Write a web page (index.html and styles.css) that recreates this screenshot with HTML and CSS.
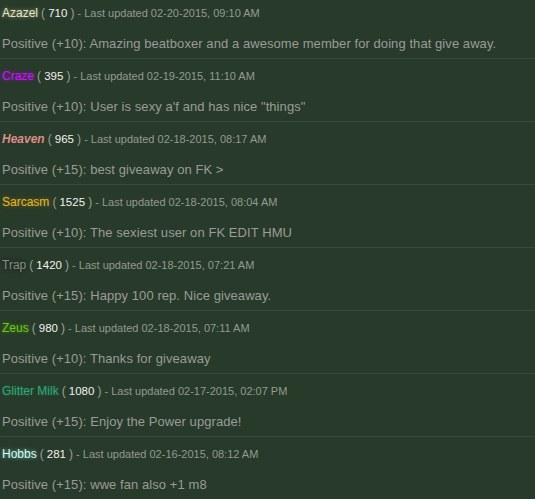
FILE: index.html
```html
<!DOCTYPE html>
<html lang="en">
<head>
  <meta charset="UTF-8" />
  <title>Reputation</title>
  <link rel="stylesheet" href="styles.css">
</head>
<body>
  <div class="rep-list">
    <div class="rep">
      <div class="rep-head"><span class="user u-azazel">Azazel</span> <span class="paren">(</span> <span class="num">710</span> <span class="paren">)</span> - Last updated 02-20-2015, 09:10 AM</div>
      <div class="rep-body">Positive (+10): Amazing beatboxer and a awesome member for doing that give away.</div>
    </div>
    <div class="rep">
      <div class="rep-head"><span class="user u-craze">Craze</span> <span class="paren">(</span> <span class="num">395</span> <span class="paren">)</span> - Last updated 02-19-2015, 11:10 AM</div>
      <div class="rep-body">Positive (+10): User is sexy a'f and has nice "things"</div>
    </div>
    <div class="rep">
      <div class="rep-head"><span class="user u-heaven">Heaven</span> <span class="paren">(</span> <span class="num">965</span> <span class="paren">)</span> - Last updated 02-18-2015, 08:17 AM</div>
      <div class="rep-body">Positive (+15): best giveaway on FK &gt;</div>
    </div>
    <div class="rep">
      <div class="rep-head"><span class="user u-sarcasm">Sarcasm</span> <span class="paren">(</span> <span class="num">1525</span> <span class="paren">)</span> - Last updated 02-18-2015, 08:04 AM</div>
      <div class="rep-body">Positive (+10): The sexiest user on FK EDIT HMU</div>
    </div>
    <div class="rep">
      <div class="rep-head"><span class="user u-trap">Trap</span> <span class="paren">(</span> <span class="num">1420</span> <span class="paren">)</span> - Last updated 02-18-2015, 07:21 AM</div>
      <div class="rep-body">Positive (+15): Happy 100 rep. Nice giveaway.</div>
    </div>
    <div class="rep">
      <div class="rep-head"><span class="user u-zeus">Zeus</span> <span class="paren">(</span> <span class="num">980</span> <span class="paren">)</span> - Last updated 02-18-2015, 07:11 AM</div>
      <div class="rep-body">Positive (+10): Thanks for giveaway</div>
    </div>
    <div class="rep">
      <div class="rep-head"><span class="user u-glitter">Glitter Milk</span> <span class="paren">(</span> <span class="num">1080</span> <span class="paren">)</span> - Last updated 02-17-2015, 02:07 PM</div>
      <div class="rep-body">Positive (+15): Enjoy the Power upgrade!</div>
    </div>
    <div class="rep">
      <div class="rep-head"><span class="user u-hobbs">Hobbs</span> <span class="paren">(</span> <span class="num">281</span> <span class="paren">)</span> - Last updated 02-16-2015, 08:12 AM</div>
      <div class="rep-body">Positive (+15): wwe fan also +1 m8</div>
    </div>
  </div>
</body>
</html>
```

FILE: styles.css
```css
body {
  margin: 0;
  background: #283a29;
  font-family: 'Liberation Sans', Arial, sans-serif;
  color: #939a93;
  overflow: hidden;
}

.rep-list {
  margin-top: -4px;
}

.rep {
  padding: 8px 2px 5px;
  border-bottom: 1px solid #36493a;
}

.rep-head {
  font-size: 11px;
  line-height: 18px;
  white-space: nowrap;
}

.rep-body {
  margin-top: 13px;
  font-size: 13px;
  line-height: 18px;
  letter-spacing: 0.07px;
  color: #9a9c98;
  white-space: nowrap;
}

.user {
  font-size: 12px;
}

.paren {
  font-size: 12px;
  color: #9aa09a;
}

.num {
  font-size: 11.5px;
  color: #f2f2f2;
}

.u-azazel {
  color: #e6e8c4;
  text-shadow: 0 0 4px rgba(230, 232, 180, 0.6);
}

.u-craze {
  color: #c814ff;
  text-shadow: 0 0 4px rgba(190, 0, 255, 0.8);
}

.u-heaven {
  color: #cf968c;
  font-weight: bold;
  font-style: italic;
  text-shadow: 1px 1px 1px #4a2a26;
}

.u-sarcasm {
  color: #ebb522;
  text-shadow: 0 0 4px rgba(235, 180, 30, 0.45);
}

.u-trap {
  color: #8a8c8a;
  text-shadow: 0 0 4px rgba(0, 0, 0, 0.6);
}

.u-zeus {
  color: #6ccc12;
  text-shadow: 0 0 4px rgba(100, 220, 0, 0.5);
}

.u-glitter {
  color: #2fa878;
  text-shadow: 0 0 3px rgba(40, 170, 120, 0.4);
}

.u-hobbs {
  color: #d4fbf6;
  text-shadow: 0 0 4px rgba(140, 240, 230, 0.7);
}
```
